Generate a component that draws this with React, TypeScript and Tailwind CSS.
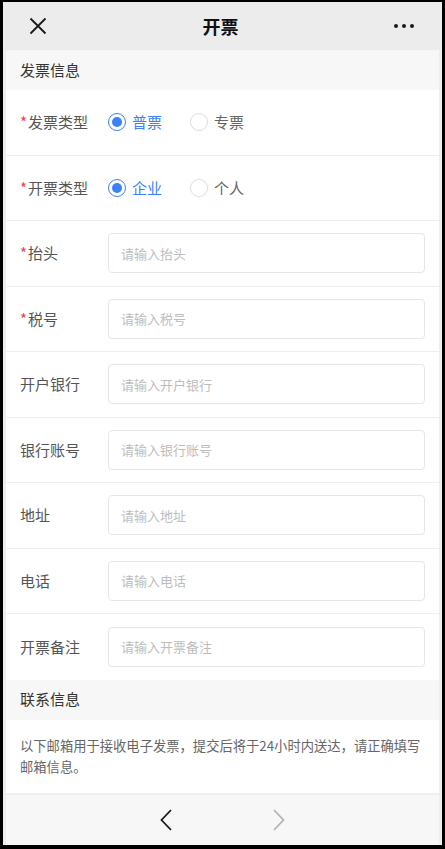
import React, { useState } from "react";

const font = { fontFamily: '"Noto Sans CJK SC", "Noto Sans", sans-serif' };

const SectionTitle: React.FC<{ title: string }> = ({ title }) => (
  <div className="h-[40px] flex items-center px-[14px] bg-[#f7f7f7] text-[15px] text-[#333]">
    {title}
  </div>
);

const Label: React.FC<{ text: string; required?: boolean }> = ({ text, required }) => (
  <div className="w-[88px] shrink-0 text-[15px] text-[#555] flex items-center">
    {required && <span className="text-[#e5484d] mr-[1px]">*</span>}
    {text}
  </div>
);

interface RadioProps {
  label: string;
  checked: boolean;
  onClick: () => void;
}

const Radio: React.FC<RadioProps> = ({ label, checked, onClick }) => (
  <button onClick={onClick} className="flex items-center gap-[6px]">
    {checked ? (
      <span className="w-[18px] h-[18px] rounded-full border-[1.5px] border-[#3b82f6] flex items-center justify-center">
        <span className="w-[10px] h-[10px] rounded-full bg-[#3b82f6]" />
      </span>
    ) : (
      <span className="w-[18px] h-[18px] rounded-full border border-[#dcdee6]" />
    )}
    <span className={checked ? "text-[15px] text-[#3b82f6]" : "text-[15px] text-[#666]"}>{label}</span>
  </button>
);

const RadioRow: React.FC<{ label: string; options: string[] }> = ({ label, options }) => {
  const [value, setValue] = useState(0);
  return (
    <div className="h-[65.5px] flex items-center px-[14px] border-b border-[#efefef] bg-white">
      <Label text={label} required />
      <div className="flex items-center gap-[28px]">
        {options.map((o, i) => (
          <Radio key={o} label={o} checked={value === i} onClick={() => setValue(i)} />
        ))}
      </div>
    </div>
  );
};

const InputRow: React.FC<{ label: string; required?: boolean; last?: boolean }> = ({ label, required, last }) => (
  <div
    className={
      last
        ? "h-[65.5px] flex items-center px-[14px] bg-white"
        : "h-[65.5px] flex items-center px-[14px] border-b border-[#efefef] bg-white"
    }
  >
    <Label text={label} required={required} />
    <input
      className="flex-1 h-[40px] rounded-[4px] border border-[#e6e6e6] pl-[12px] text-[13px] text-[#333] placeholder:text-[#bdbdbd] outline-none"
      style={font}
      placeholder={`请输入${label}`}
    />
  </div>
);

export default function App() {
  return (
    <div className="w-[445px] h-[849px] bg-black pt-[2px] pb-[4px] px-[3px] flex flex-col" style={font}>
      <div className="flex-1 flex flex-col bg-[#eeeeee]">
        <div className="h-[48px] shrink-0 flex items-center justify-between px-[26px] bg-[#ececec]">
          <svg width="18" height="18" viewBox="0 0 18 18" fill="none" stroke="#1a1a1a" strokeWidth="1.8">
            <path d="M1.5 1.5L16.5 16.5M16.5 1.5L1.5 16.5" />
          </svg>
          <div className="text-[18px] font-semibold text-[#111]">开票</div>
          <div className="flex items-center gap-[4px] pr-[2px]">
            <span className="w-[4px] h-[4px] rounded-full bg-[#1a1a1a]" />
            <span className="w-[4px] h-[4px] rounded-full bg-[#1a1a1a]" />
            <span className="w-[4px] h-[4px] rounded-full bg-[#1a1a1a]" />
          </div>
        </div>

        <div className="flex-1 mx-[3px] flex flex-col bg-white">
          <SectionTitle title="发票信息" />
          <RadioRow label="发票类型" options={["普票", "专票"]} />
          <RadioRow label="开票类型" options={["企业", "个人"]} />
          <InputRow label="抬头" required />
          <InputRow label="税号" required />
          <InputRow label="开户银行" />
          <InputRow label="银行账号" />
          <InputRow label="地址" />
          <InputRow label="电话" />
          <InputRow label="开票备注" last />

          <SectionTitle title="联系信息" />
          <div className="h-[73px] px-[14px] pt-[15px] text-[13.3px] leading-[21px] text-[#666]">
            以下邮箱用于接收电子发票，提交后将于24小时内送达，请正确填写
            <br />
            邮箱信息。
          </div>

          <div className="flex-1 flex items-center justify-center gap-[101px] pr-[1px] bg-[#f7f7f7] border-t-2 border-[#efefef]">
            <svg width="12" height="22" viewBox="0 0 12 22" fill="none" stroke="#1a1a1a" strokeWidth="1.8">
              <path d="M11 1L1.5 11L11 21" />
            </svg>
            <svg width="12" height="22" viewBox="0 0 12 22" fill="none" stroke="#b3b3b3" strokeWidth="1.8">
              <path d="M1 1L10.5 11L1 21" />
            </svg>
          </div>
        </div>
      </div>
    </div>
  );
}
